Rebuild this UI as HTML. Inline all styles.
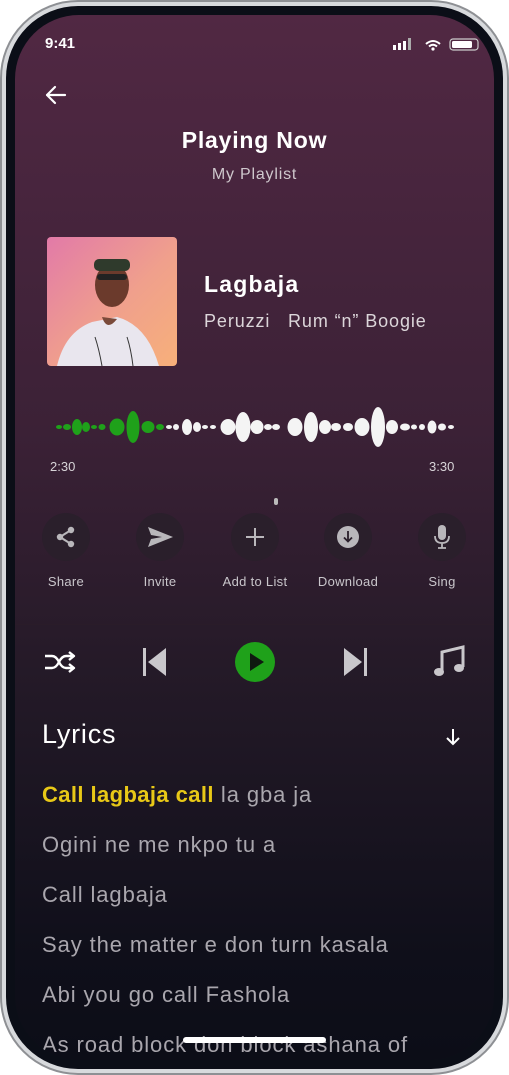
<!DOCTYPE html>
<html><head><meta charset="utf-8"><style>
*{margin:0;padding:0;box-sizing:border-box}
body{width:509px;height:1075px;background:#fff;position:relative;overflow:hidden;font-family:"Liberation Sans",sans-serif}
.frame{position:absolute;left:0;top:0;width:509px;height:1075px;border-radius:78px;background:#d8dadd;border:2px solid #8e9094}
.bezel{position:absolute;left:6px;top:6px;width:497px;height:1063px;border-radius:72px;background:#0b0e17}
.screen{position:absolute;left:15px;top:15px;width:479px;height:1045px;border-radius:64px;overflow:hidden;background:linear-gradient(180deg,#512843 0%,#3b2136 40%,#251a28 62%,#0f0f1a 90%,#0c0d17 100%)}
.a{position:absolute}
.t{color:#fff;white-space:nowrap}
.circ{position:absolute;width:48px;height:48px;border-radius:50%;background:#2a1f2b;display:flex;align-items:center;justify-content:center}
.lbl{position:absolute;color:#c9c6cb;font-size:13px;width:100px;text-align:center;letter-spacing:0.3px}
.ly{position:absolute;left:27px;font-size:22px;color:#a9a6ad;white-space:nowrap;letter-spacing:0.9px}
</style></head><body>
<div class="frame"></div><div class="bezel"></div>
<div class="screen">
<div class="a t" style="left:30px;top:20px;font-size:15px;font-weight:bold">9:41</div>
<svg class="a" style="left:378px;top:23px" width="90" height="14">
<rect x="0" y="7" width="3" height="5" fill="#fff"/><rect x="5" y="5" width="3" height="7" fill="#fff"/><rect x="10" y="3" width="3" height="9" fill="#fff"/><rect x="15" y="0" width="3" height="12" fill="#aaa"/>
<path d="M33 6 Q40 0 47 6" stroke="#fff" stroke-width="2" fill="none"/><path d="M36 8.5 Q40 5 44 8.5" stroke="#fff" stroke-width="2" fill="none"/><circle cx="40" cy="11" r="1.6" fill="#fff"/>
<rect x="57" y="1" width="28" height="11" rx="3" stroke="#ccc" stroke-width="1.2" fill="none"/><rect x="59" y="3" width="20" height="7" rx="1.5" fill="#fff"/>
</svg>
<svg class="a" style="left:29px;top:70px" width="24" height="20"><path d="M21 10H3M11 2L3 10L11 18" stroke="#fff" stroke-width="2.2" fill="none" stroke-linecap="round" stroke-linejoin="round"/></svg>
<div class="a t" style="left:0;width:479px;text-align:center;top:112px;font-size:23px;font-weight:bold;letter-spacing:0.8px">Playing Now</div>
<div class="a" style="left:0;width:479px;text-align:center;top:151px;font-size:16px;color:#cfc8cd;letter-spacing:0.8px">My Playlist</div>
<div class="a" style="left:32px;top:222px;width:130px;height:129px;border-radius:4px;overflow:hidden;background:linear-gradient(135deg,#e27aa8 0%,#f0a08c 55%,#f7b07a 100%)">
<svg width="130" height="129"><path d="M10 129 Q18 95 45 85 L70 80 Q100 88 112 129Z" fill="#e9e6ee"/><path d="M55 80 Q60 95 70 82" fill="#7a4a3a"/><ellipse cx="65" cy="48" rx="17" ry="22" fill="#6b3a2c"/><rect x="47" y="22" width="36" height="12" rx="5" fill="#2f3a2c"/><rect x="50" y="37" width="30" height="6" rx="3" fill="#222"/><path d="M48 100 Q52 112 55 129" stroke="#333" fill="none"/><path d="M80 100 Q84 112 86 129" stroke="#333" fill="none"/></svg>
</div>
<div class="a t" style="left:189px;top:256px;font-size:23px;font-weight:bold;letter-spacing:1.2px">Lagbaja</div>
<div class="a" style="left:189px;top:296px;font-size:18px;color:#dcd6da;white-space:nowrap;letter-spacing:0.9px">Peruzzi&nbsp;&nbsp; Rum “n” Boogie</div>
<svg class="a" style="left:0;top:380px" width="479" height="64">
<g fill="#1fa11a"><ellipse cx="44" cy="32" rx="3" ry="2"/><ellipse cx="52" cy="32" rx="4" ry="3"/><ellipse cx="62" cy="32" rx="5" ry="8"/><ellipse cx="71" cy="32" rx="4" ry="5"/><ellipse cx="79" cy="32" rx="3" ry="2"/><ellipse cx="87" cy="32" rx="3.5" ry="3"/><ellipse cx="102" cy="32" rx="7.5" ry="8.5"/><ellipse cx="118" cy="32" rx="6.5" ry="16"/><ellipse cx="133" cy="32" rx="6.5" ry="6"/><ellipse cx="145" cy="32" rx="4" ry="3"/></g>
<g fill="#f4f4f4"><ellipse cx="154" cy="32" rx="3" ry="2"/><ellipse cx="161" cy="32" rx="3" ry="3"/><ellipse cx="172" cy="32" rx="5" ry="8"/><ellipse cx="182" cy="32" rx="4" ry="5"/><ellipse cx="190" cy="32" rx="3" ry="2"/><ellipse cx="198" cy="32" rx="3" ry="2"/><ellipse cx="213" cy="32" rx="7.5" ry="8"/><ellipse cx="228" cy="32" rx="7.5" ry="15"/><ellipse cx="242" cy="32" rx="6.5" ry="7"/><ellipse cx="253" cy="32" rx="4" ry="3"/><ellipse cx="261" cy="32" rx="4" ry="3"/><ellipse cx="280" cy="32" rx="7.5" ry="9"/><ellipse cx="296" cy="32" rx="7" ry="15"/><ellipse cx="310" cy="32" rx="6" ry="7"/><ellipse cx="321" cy="32" rx="5" ry="4"/><ellipse cx="333" cy="32" rx="5" ry="4"/><ellipse cx="347" cy="32" rx="7.5" ry="9"/><ellipse cx="363" cy="32" rx="7" ry="20"/><ellipse cx="377" cy="32" rx="6" ry="7"/><ellipse cx="390" cy="32" rx="5" ry="3.5"/><ellipse cx="399" cy="32" rx="3" ry="2.5"/><ellipse cx="407" cy="32" rx="3" ry="3"/><ellipse cx="417" cy="32" rx="4.5" ry="6.5"/><ellipse cx="427" cy="32" rx="4" ry="3.5"/><ellipse cx="436" cy="32" rx="3" ry="2"/></g>
</svg>
<div class="a" style="left:35px;top:444px;font-size:13px;color:#d8d4d8">2:30</div>
<div class="a" style="left:414px;top:444px;font-size:13px;color:#d8d4d8">3:30</div>
<div class="a" style="left:259px;top:483px;width:4px;height:7px;border-radius:2px;background:#bbb"></div>
<div class="circ" style="left:27px;top:498px"><svg width="24" height="24"><circle cx="17" cy="5" r="3.2" fill="#b9b7bb"/><circle cx="6" cy="12" r="3.2" fill="#b9b7bb"/><circle cx="17" cy="19" r="3.2" fill="#b9b7bb"/><path d="M6 12L17 5M6 12L17 19" stroke="#b9b7bb" stroke-width="2"/></svg></div>
<div class="circ" style="left:121px;top:498px"><svg width="28" height="24"><path d="M2 2L27 12L2 22L5 14L16 12L5 10Z" fill="#b9b7bb"/></svg></div>
<div class="circ" style="left:216px;top:498px"><svg width="24" height="24"><path d="M12 3V21M3 12H21" stroke="#b9b7bb" stroke-width="2"/></svg></div>
<div class="circ" style="left:309px;top:498px"><svg width="24" height="24"><circle cx="12" cy="12" r="11" fill="#b9b7bb"/><path d="M12 6V16M8 12.5L12 16.5L16 12.5" stroke="#2a1f2b" stroke-width="1.8" fill="none"/></svg></div>
<div class="circ" style="left:403px;top:498px"><svg width="24" height="26"><rect x="8" y="1" width="8" height="15" rx="4" fill="#b9b7bb"/><path d="M5 12Q5 19 12 19Q19 19 19 12M12 19V24M8 24H16" stroke="#b9b7bb" stroke-width="1.8" fill="none"/></svg></div>
<div class="lbl" style="left:1px;top:559px">Share</div>
<div class="lbl" style="left:95px;top:559px">Invite</div>
<div class="lbl" style="left:190px;top:559px">Add to List</div>
<div class="lbl" style="left:283px;top:559px">Download</div>
<div class="lbl" style="left:377px;top:559px">Sing</div>
<div class="a" style="left:0;top:609px;width:479px;height:1px;background:#2a1c29"></div>
<svg class="a" style="left:28px;top:633px" width="34" height="28"><path d="M2 8H9Q13 8 16 14Q19 20 23 20H30M2 20H9Q13 20 16 14Q19 8 23 8H30M26 4L31 8L26 12M26 16L31 20L26 24" stroke="#fff" stroke-width="2.4" fill="none" stroke-linejoin="round"/></svg>
<svg class="a" style="left:127px;top:632px" width="26" height="30"><rect x="1" y="1" width="3" height="28" fill="#c9c7cb"/><path d="M24 1V29L6 15Z" fill="#c9c7cb"/></svg>
<svg class="a" style="left:219px;top:626px" width="42" height="42"><circle cx="21" cy="21" r="20" fill="#1fa11a"/><path d="M16 12V30L30 21Z" fill="#0f1a10"/></svg>
<svg class="a" style="left:327px;top:632px" width="26" height="30"><rect x="22" y="1" width="3" height="28" fill="#c9c7cb"/><path d="M2 1V29L20 15Z" fill="#c9c7cb"/></svg>
<svg class="a" style="left:418px;top:630px" width="32" height="34"><path d="M9 27V7L30 2V22" stroke="#c9c7cb" stroke-width="3" fill="none"/><ellipse cx="6" cy="27" rx="5" ry="4" fill="#c9c7cb"/><ellipse cx="26" cy="23" rx="5" ry="4" fill="#c9c7cb"/></svg>
<div class="a t" style="left:27px;top:704px;font-size:27px;letter-spacing:0.8px">Lyrics</div>
<svg class="a" style="left:430px;top:712px" width="16" height="20"><path d="M8 2V17M2 11L8 17L14 11" stroke="#fff" stroke-width="2" fill="none"/></svg>
<div class="ly" style="top:767px"><span style="color:#e8c817;font-weight:bold;letter-spacing:0.4px">Call lagbaja call</span> la gba ja</div>
<div class="ly" style="top:817px">Ogini ne me nkpo tu a</div>
<div class="ly" style="top:867px">Call lagbaja</div>
<div class="ly" style="top:917px">Say the matter e don turn kasala</div>
<div class="ly" style="top:967px">Abi you go call Fashola</div>
<div class="ly" style="top:1017px">As road block don block ashana of</div>
<div class="a" style="left:168px;top:1022px;width:143px;height:6px;border-radius:3px;background:#fff"></div>
</div>
</body></html>
